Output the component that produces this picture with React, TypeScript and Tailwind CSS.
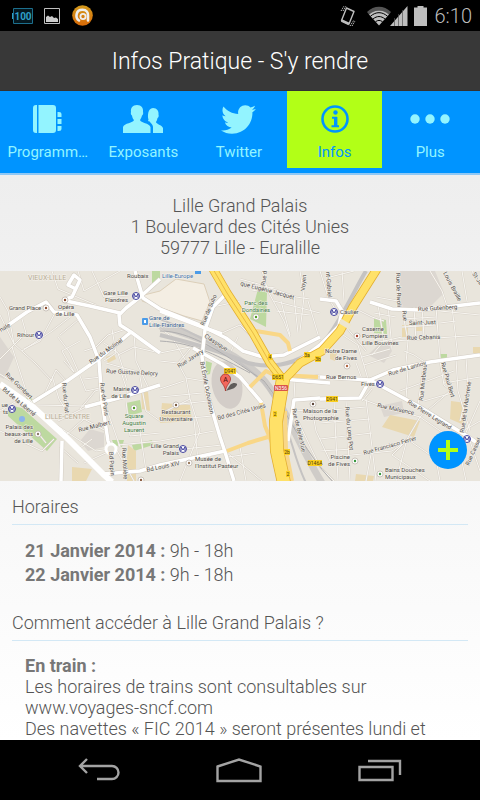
import { ReactNode } from 'react';
import { FaTwitter } from 'react-icons/fa';

type Label = { x: number; y: number; text: string; rotate?: number; anchor?: 'start' | 'middle' | 'end'; color?: string; size?: number };

const minorRoads = [
  'M14 73L8 40L0 26', 'M0 88L26 62L22 48', 'M0 44L14 73L35 92L52 110', 'M12 76L30 132', 'M24 78L40 70L56 40',
  'M22 80L52 60L70 46', 'M60 64L78 49', 'M0 103L14 112L32 131', 'M58 66L70 82L78 100', 'M64 90L74 101L62 80L80 70',
  'M44 124L56 99L66 110', 'M52 105L59 128L64 136', 'M64 112L66 136', 'M36 134L84 135', 'M80 138L95 120L102 118',
  'M84 108L102 106', 'M80 105L86 120L104 116', 'M84 80L96 76L108 64L126 58', 'M104 72L118 82L127 110', 'M112 58L116 82L104 90',
  'M106 92L156 106', 'M118 84L134 76L160 82', 'M134 62L136 90L148 116', 'M140 106L146 140L160 150', 'M120 98L130 128',
  'M126 130L130 165L160 162', 'M104 130L120 176', 'M58 150L90 134', 'M66 164L84 148L106 160', 'M56 154L96 180L110 178',
  'M76 180L92 168', 'M60 176L78 192', 'M84 192L110 180', 'M116 178L134 210', 'M118 174L160 170', 'M124 182L126 210',
  'M140 160L146 200', 'M0 160L42 180L54 168', 'M46 172L38 162', 'M0 140L20 128', 'M78 0L84 20L120 0', 'M52 0L58 18L96 34',
  'M92 0L104 26L130 24', 'M150 50L172 66L186 90', 'M160 82L190 76', 'M160 90L178 92L186 107L204 110', 'M178 92L190 78',
  'M160 118L184 110', 'M160 126L202 122', 'M186 107L190 128L166 140', 'M172 134L208 130', 'M160 150L212 145', 'M190 128L200 160L180 210',
  'M160 170L214 160', 'M184 178L222 174', 'M194 148L198 190', 'M222 178L250 200L262 210', 'M228 186L256 182', 'M240 176L246 210',
  'M213 36L240 30', 'M222 62L240 54L250 64', 'M238 66L230 82', 'M240 8L262 14L296 26L310 28', 'M262 0L268 20L284 50L290 66',
  'M252 20L275 16', 'M300 0L304 26L300 60', 'M274 30L320 42', 'M276 40L310 44', 'M281 30L290 64', 'M294 26L298 62', 'M308 30L320 70',
  'M320 0L328 26L342 50', 'M342 0L344 30', 'M330 6L354 0', 'M376 26L398 30L397 0', 'M378 34L384 70L372 84', 'M388 34L392 78',
  'M374 42L396 46', 'M402 38L408 70L406 92', 'M414 36L416 70', 'M422 36L424 66', 'M436 36L440 88', 'M452 36L458 86', 'M402 48L436 46',
  'M402 56L436 54', 'M394 70L480 64', 'M440 40L480 44', 'M440 52L456 50', 'M366 74L402 66', 'M346 56L366 80', 'M340 62L358 74L368 108',
  'M360 40L372 46L384 50', 'M362 86L390 78', 'M356 92L362 108', 'M364 94L396 84', 'M404 80L414 84L426 92', 'M424 92L418 134',
  'M408 98L406 128', 'M440 90L444 114L454 122', 'M456 88L458 120L470 160', 'M466 86L468 120L460 150', 'M400 120L454 100',
  'M450 120L420 146L406 170L392 184', 'M444 112L480 106', 'M424 130L452 122', 'M362 128L378 134L420 146', 'M366 128L372 176L376 210',
  'M372 118L362 130', 'M346 130L350 210', 'M334 130L338 210', 'M320 140L366 136', 'M320 152L370 148', 'M320 168L372 162',
  'M292 140L330 138', 'M294 128L295 108L320 104', 'M310 126L316 160L330 190', 'M298 150L320 196L334 210', 'M320 180L352 178',
  'M342 185L392 180L410 168', 'M372 178L366 210', 'M392 184L430 210', 'M410 170L436 188L440 210', 'M406 172L396 210', 'M420 146L452 168',
  'M438 174L480 150', 'M464 166L480 130', 'M458 172L466 210', 'M470 170L480 200', 'M430 0L442 20L448 38', 'M462 0L468 36', 'M472 0L480 14',
];

const mainRoads = [
  'M0 60L27 41L46 31L54 41L65 42L77 44L90 66L99 90L102 130L108 170L111 178', 'M66 30L90 35L120 42', 'M66 28L72 26L80 9L74 4L68 14L76 18',
  'M131 61L100 87L67 110L33 131', 'M160 8L140 26L126 37L119 44L120 54L131 61L146 72L160 82', 'M135 0L143 27L160 38L200 54L226 67L243 80L263 86L284 84L320 66',
  'M62 170L61 210', 'M85 136L126 125L160 114', 'M227 22L213 36L205 59L202 86L207 122L220 166L225 181L234 210',
  'M193 77L222 93L240 106L262 132', 'M160 40L205 57L222 63', 'M370 31L392 38L420 39L480 32', 'M370 109L393 99L430 91L480 84',
  'M320 106L370 109L383 116L420 136L467 165L480 174', 'M320 128L360 127L370 109', 'M296 92L320 74L339 55L342 40L336 30L320 28',
  'M288 170L294 129L320 127', 'M103 203L140 200L160 194L225 180', 'M282 108L330 112',
];

const streetNames: Label[] = [
  { x: 28, y: 9, text: 'VIEUX-LILLE', color: '#b5aa93', size: 7 },
  { x: 45, y: 148, text: 'LILLE-CENTRE', color: '#b5aa93', size: 7 },
  { x: 91, y: 93, text: 'Rue du Molinel', rotate: -35 },
  { x: 106, y: 102, text: 'Rue Gustave Delory', rotate: 3 },
  { x: 100, y: 112, text: 'Rue de Paris', rotate: 82 },
  { x: 5, y: 104, text: 'Rue Gombert', rotate: 44 },
  { x: 2, y: 119, text: 'Bd de la Liberté', rotate: 40 },
  { x: 62, y: 112, text: 'Rue du Plat', rotate: 84 },
  { x: 79, y: 161, text: 'Rue Malbert', rotate: -14 },
  { x: 109, y: 181, text: 'Bd Papin', rotate: 86 },
  { x: 122, y: 177, text: 'Rue Molière', rotate: 87 },
  { x: 147, y: 201, text: 'Bd Louis XIV', rotate: -12 },
  { x: 1, y: 61, text: 'nale', rotate: -30 },
  { x: 204, y: 55, text: 'Rue de Sulio', rotate: -67 },
  { x: 204, y: 66, text: 'Classique', rotate: 33 },
  { x: 179, y: 97, text: 'Rue Javary', rotate: -32 },
  { x: 200, y: 91, text: 'Bd Émile Dubuisson', rotate: 79 },
  { x: 218, y: 149, text: 'Bd des Cités Unies', rotate: -15 },
  { x: 240, y: 14, text: 'que Eugénie Jacquet', rotate: 15 },
  { x: 265, y: 15, text: 'Rue d', rotate: -82 },
  { x: 305, y: 20, text: 'Voyen', rotate: -86 },
  { x: 326, y: 1, text: 'nt-Gabriel', rotate: 86 },
  { x: 292, y: 138, text: 'Rue de Belle Vue', rotate: 77 },
  { x: 396, y: 2, text: 'Rue de Rivoli', rotate: 88 },
  { x: 443, y: 2, text: 'Louis Braille', rotate: 62 },
  { x: 472, y: 3, text: 'St-Jac', rotate: 55 },
  { x: 418, y: 40, text: 'Rue Gutenberg', rotate: -3 },
  { x: 409, y: 54, text: 'Saint-Just', rotate: -2 },
  { x: 402, y: 40, text: 'Rue', rotate: 82 },
  { x: 407, y: 69, text: 'Rue Cabanis', rotate: -2 },
  { x: 389, y: 105, text: 'Rue de Lannoy', rotate: -17 },
  { x: 326, y: 108, text: 'Rue Bernos' },
  { x: 423, y: 130, text: 'Rue Mirabeau', rotate: -84 },
  { x: 441, y: 92, text: 'Rue Paul Bert', rotate: 74 },
  { x: 377, y: 136, text: 'Rue Malsence', rotate: 12 },
  { x: 407, y: 132, text: 'Rue Pierre Legrand', rotate: 32 },
  { x: 345, y: 136, text: 'Rue du Long Pot', rotate: 84 },
  { x: 364, y: 184, text: 'Rue Francisco Ferrer', rotate: -16 },
  { x: 464, y: 162, text: 'Rue de la Marbrerie', rotate: -82 },
  { x: 469, y: 195, text: 'Rue Cassel', rotate: -66 },
];

const placeNames: Label[] = [
  { x: 127, y: 7, text: 'Roubaix' },
  { x: 128, y: 24, text: 'Gare Lille', anchor: 'end' },
  { x: 128, y: 31, text: 'Flandres', anchor: 'end' },
  { x: 9, y: 39, text: 'Grand Place' },
  { x: 66, y: 38, text: 'Opéra', anchor: 'middle' },
  { x: 65, y: 45, text: 'de Lille', anchor: 'middle' },
  { x: 17, y: 66, text: 'Rihour' },
  { x: 162, y: 7, text: 'Lille-Europe', color: '#4272ab' },
  { x: 149, y: 49, text: 'Gare de', color: '#35608e' },
  { x: 149, y: 56, text: 'Lille-Flandres', color: '#35608e' },
  { x: 130, y: 120, text: 'Mairie', anchor: 'end' },
  { x: 130, y: 127, text: 'de Lille', anchor: 'end' },
  { x: 134, y: 147, text: 'Square', anchor: 'middle', color: '#427c45' },
  { x: 134, y: 154, text: 'Augustin', anchor: 'middle', color: '#427c45' },
  { x: 134, y: 161, text: 'Laurent', anchor: 'middle', color: '#427c45' },
  { x: 8, y: 136, text: 'ue', anchor: 'end' },
  { x: 8, y: 143, text: 'ts', anchor: 'end' },
  { x: 33, y: 158, text: 'Palais des', anchor: 'end' },
  { x: 33, y: 165, text: 'beaux-arts', anchor: 'end' },
  { x: 33, y: 172, text: 'de Lille', anchor: 'end' },
  { x: 176, y: 143, text: 'Restaurant', anchor: 'middle' },
  { x: 176, y: 150, text: 'Universitaire', anchor: 'middle' },
  { x: 179, y: 177, text: 'Lille Grand', anchor: 'end' },
  { x: 179, y: 184, text: 'Palais', anchor: 'end' },
  { x: 195, y: 190, text: 'Musée de' },
  { x: 195, y: 197, text: "l'Institut Pasteur" },
  { x: 256, y: 34, text: 'Parc des', anchor: 'middle', color: '#427c45' },
  { x: 256, y: 41, text: 'Dondaines', anchor: 'middle', color: '#427c45' },
  { x: 340, y: 43, text: 'Caulier' },
  { x: 362, y: 60, text: 'Caserne' },
  { x: 362, y: 67, text: 'Pompiers' },
  { x: 362, y: 74, text: 'Lille Bouvines' },
  { x: 357, y: 82, text: 'Notre Dame', anchor: 'end' },
  { x: 357, y: 89, text: 'de Fives', anchor: 'end' },
  { x: 361, y: 115, text: 'Fives' },
  { x: 303, y: 142, text: 'Maison de la' },
  { x: 303, y: 149, text: 'Photographie' },
  { x: 350, y: 188, text: 'Piscine', anchor: 'end' },
  { x: 350, y: 195, text: 'de Fives', anchor: 'end' },
  { x: 385, y: 201, text: 'Bains Douches' },
  { x: 385, y: 208, text: 'Municipaux' },
];

const metros = [[39, 64], [136, 25], [135, 119], [12, 138], [183, 178], [334, 41], [380, 113], [467, 168]];
const pins = [[46, 37, '#8a4b30'], [65, 29, '#8a4b30'], [38, 163, '#8a7a66'], [134, 137, '#4d9a22'], [176, 134, '#7a5b40'], [189, 192, '#9a7b60'],
  [256, 46, '#4d9a22'], [357, 65, '#a33f2b'], [347, 95, '#b0643f'], [313, 133, '#5b4336'], [355, 190, '#35963c'], [380, 203, '#35963c'], [141, 209, '#8a5b40']] as const;

const signs = [
  { x: 224, y: 97, w: 12, text: 'D941' }, { x: 272, y: 103, w: 12, text: 'D651' }, { x: 326, y: 125, w: 12, text: 'D941' },
  { x: 308, y: 189, w: 14, text: 'D146A' }, { x: 304, y: 81, w: 6, text: '3a' }, { x: 315, y: 85, w: 6, text: '3b' },
  { x: 284, y: 178, w: 6, text: '2b' }, { x: 268, y: 83, w: 4, text: '4' }, { x: 273, y: 140, w: 4, text: '2' }, { x: 286, y: 200, w: 4, text: '2' },
];

function MapLabel({ x, y, text, rotate, anchor, color, size }: Label) {
  return (
    <text x={x} y={y} fontSize={size} textAnchor={anchor} fill={color ?? '#4f4b48'} transform={rotate ? `rotate(${rotate} ${x} ${y})` : undefined}>
      {text}
    </text>
  );
}

function LilleMap() {
  return (
    <svg viewBox="0 0 480 210" preserveAspectRatio="xMidYMid slice" className="block h-[210px] w-full bg-[#e9e5dc] font-normal" role="img" aria-label="Lille Grand Palais">
      {/* blocs, parcs et bâtiments */}
      <g fill="#dcd7d1">
        <path d="M0 66L14 86L4 108L0 106ZM90 158L104 162L104 176L88 180L80 170ZM400 0L435 0L444 22L428 38L400 36ZM378 74L388 70L392 80L384 92L368 84ZM380 135L402 130L404 142L384 146Z" />
        <ellipse cx="227" cy="114" rx="15" ry="24" transform="rotate(-12 227 114)" fill="#d3cdc8" />
      </g>
      <g fill="#bdd9a0">
        <path d="M8 134L22 137L57 168L47 180L8 145ZM126 132L140 129L142 141L129 145ZM112 169L124 169L122 176L114 174ZM132 174L152 169L153 174L134 180ZM258 18L267 21L266 56L250 48ZM206 90L212 92L210 103L206 104ZM374 47L386 49L387 63L374 62ZM439 83L447 83L447 89L439 89ZM24 129L30 125L33 130L27 135ZM152 0L160 0L160 9L152 17Z" />
      </g>
      <g fill="#e9d8b0">
        <path d="M106 86L114 83L116 88L108 92ZM141 120L148 121L150 140L142 138ZM128 174L136 180L136 210L125 210ZM72 196L92 198L86 210L72 210ZM162 132L190 134L192 150L160 152ZM390 144L420 150L414 166L382 156ZM451 130L466 132L464 154L450 148ZM402 54L408 54L408 66L402 66ZM416 52L422 52L422 60L416 60ZM473 76L480 76L480 84L473 82ZM330 80L337 82L335 90L330 88ZM356 203L374 205L373 210L355 210Z" />
      </g>
      <path d="M160 20L176 8L204 13L210 31L202 50L184 45L142 30L144 24Z" fill="#f4eee3" stroke="#dccfb9" />
      <circle cx="22" cy="148" r="3" fill="#8bb4ec" />

      <g fill="none" strokeLinejoin="round">
        <g stroke="#d9d3ca" strokeWidth="2">{minorRoads.map(d => <path key={d} d={d} />)}</g>
        <g stroke="#f8f6f1" strokeWidth="1">{minorRoads.map(d => <path key={d} d={d} />)}</g>

        {/* voies ferrées */}
        <g stroke="#c5c3c2">
          <path d="M160 55C200 66 236 82 260 105C284 130 296 170 322 212" strokeWidth="7" opacity=".75" />
          <path d="M160 64C200 74 225 82 248 92C280 100 310 88 328 66C346 40 356 16 366 0" strokeWidth="4" />
          <path d="M160 48C200 64 236 86 262 110C290 145 290 180 306 212" strokeWidth="2" />
          <path d="M160 60C190 60 220 80 264 110C288 140 300 176 334 212M160 70C196 72 220 86 250 102" strokeWidth="1" stroke="#aeadae" />
        </g>

        <g stroke="#d3cdc4" strokeWidth="4.5">{mainRoads.map(d => <path key={d} d={d} />)}</g>
        <g stroke="#fff" strokeWidth="3.5">{mainRoads.map(d => <path key={d} d={d} />)}</g>
        <path d="M0 113L33 136L66 166L103 203L112 211" stroke="#fff" strokeWidth="6" />
        <circle cx="111" cy="178" r="5" stroke="#fff" strokeWidth="3" fill="#e9e5dc" />

        {/* bretelles */}
        <g stroke="#f9d787" strokeWidth="4">
          <path d="M227 180L248 172L268 166M261 132L265 155L272 172L280 210M256 60L280 64L288 72L290 80M250 116L266 100L280 107M280 104L318 106M285 140L286 180L292 210" />
        </g>
        <g stroke="#e3ae2f">
          <path d="M213 -2L227 22L253 62L270 92L284 110" strokeWidth="9" />
          <path d="M283 108L276 150L277 180L284 212" strokeWidth="14" />
          <path d="M283 110L300 92L322 80L340 60L353 36L377 -2" strokeWidth="9" />
        </g>
        <g stroke="#ffe168">
          <path d="M213 -2L227 22L253 62L270 92L284 110" strokeWidth="7.5" />
          <path d="M283 108L276 150L277 180L284 212" strokeWidth="12.5" />
          <path d="M283 110L300 92L322 80L340 60L353 36L377 -2" strokeWidth="7.5" />
        </g>
        <path d="M213 -2L227 22L253 62L270 92L284 110" stroke="#e9b944" strokeWidth="1" />
        <path d="M340 50L350 56" stroke="#ece5d0" strokeWidth="5" />
      </g>

      <g fontFamily="Roboto, sans-serif" fontSize="6" stroke="#f5f2ec" strokeWidth="1" paintOrder="stroke">
        {streetNames.map(l => <MapLabel key={l.text + l.x} {...l} />)}
        {placeNames.map(l => <MapLabel key={l.text + l.x} {...l} />)}
      </g>

      {metros.map(([x, y]) => (
        <g key={x} fill="none" stroke="#41419c">
          <circle cx={x} cy={y} r="3.5" fill="#fff" />
          <path d={`M${x - 2} ${y + 2}V${y - 2}L${x} ${y + 1}L${x + 2} ${y - 2}V${y + 2}`} />
        </g>
      ))}
      <rect x="142" y="47" width="6" height="7" rx="1" fill="#4b9be8" />
      <rect x="144" y="49" width="2" height="3" fill="#fff" />
      <path d="M195 0H201V3H195Z" fill="#4b9be8" />
      {pins.map(([x, y, color]) => (
        <g key={x}>
          <circle cx={x} cy={y} r="3" fill="#fff" stroke="#b9b0a6" strokeWidth=".7" />
          <circle cx={x} cy={y} r="1.2" fill={color} />
        </g>
      ))}

      <g fontFamily="Roboto, sans-serif" fontSize="5" textAnchor="middle">
        {signs.map(s => (
          <g key={s.x}>
            <rect x={s.x} y={s.y} width={s.w} height="6" fill="#fbcf20" />
            <text x={s.x + s.w / 2} y={s.y + 5} fill="#4b3b10">{s.text}</text>
          </g>
        ))}
        <rect x="274" y="114" width="14" height="6" rx="1" fill="#d9534a" />
        <text x="281" y="119" fill="#fff">N356</text>
      </g>

      {/* marqueur A */}
      <path d="M226 120L230 114C233 111 238 112 237 114C235 118 231 118 226 120Z" fill="#000" opacity=".55" />
      <path d="M225.500 120C225 114 220.500 112 220.500 108A5 5 0 0 1 230.500 108C230.500 112 226 114 225.500 120Z" fill="#f2675c" stroke="#a6322b" strokeWidth=".8" />
      <text x="225.500" y="111" fontFamily="Roboto, sans-serif" fontSize="7" textAnchor="middle" fill="#4a0f0b">A</text>
    </svg>
  );
}

function StatusBar() {
  return (
    <header className="flex h-[31px] shrink-0 items-center justify-between bg-black pr-2 pl-3 text-[#bebebe]">
      <div className="flex items-center">
        <svg width="22" height="18" viewBox="0 0 22 18">
          <path d="M1.500 1.500H20.500V16.500H1.500Z" fill="#04171f" stroke="#1c6f8d" />
          <path d="M0 6H1V12H0Z" fill="#2f9fc8" />
          <text x="11" y="13" fontFamily="Roboto, sans-serif" fontSize="10" fontWeight="700" textAnchor="middle" fill="#2f9fc8">100</text>
        </svg>
        <svg className="ml-[10px]" width="16" height="16" viewBox="0 0 16 16">
          <path d="M.5.5H15.500V15.500H.5Z" fill="none" stroke="currentColor" />
          <path d="M2 14V9L4 7.500L6 9L8 8L10 10L12 9.500L14 11V14Z" fill="#ccc" />
        </svg>
        <svg className="ml-3" width="21" height="21" viewBox="0 0 21 21">
          <defs>
            <linearGradient id="avast" x1="0" y1="0" x2="0" y2="1">
              <stop offset="0" stopColor="#d29a1c" />
              <stop offset="1" stopColor="#d96a08" />
            </linearGradient>
          </defs>
          <circle cx="10.500" cy="10.500" r="10.300" fill="url(#avast)" />
          <path d="M7 15.500C3 13 3.500 4.800 10.500 4.800C14.500 4.800 16.200 7.500 16 10.500V15.500" fill="none" stroke="#eee" strokeWidth="2.600" strokeLinecap="round" />
          <circle cx="11" cy="11.500" r="2.600" fill="none" stroke="#eee" strokeWidth="1.800" />
        </svg>
      </div>
      <div className="flex items-center">
        <svg width="18" height="22" viewBox="0 0 18 22" fill="none" stroke="currentColor">
          <path d="M7.500 3L15 6.500L10 19L2.500 15.500Z" strokeWidth="1.400" strokeLinejoin="round" />
          <path d="M2.500 15.500L10 19" strokeWidth="2.500" />
          <path d="M4 6L7 1M2 6L5 1M11 21L15 15M13 21L16 16" strokeWidth="1" strokeDasharray="1.500 1" />
        </svg>
        <svg className="ml-[10px]" width="24" height="20" viewBox="0 0 24 20">
          <path d="M0 6C7-1 17-1 24 6L22 8.500C16 3 8 3 2 8.500Z" fill="#555" />
          <path d="M2 8.500C8 3 16 3 22 8.500L12 19.500Z" fill="currentColor" />
          <path d="M3.500 10.200C9 5.500 15 5.500 20.500 10.200M6 13C10 9.700 14 9.700 18 13M8.500 15.700C11 14 13 14 15.500 15.700" fill="none" stroke="#000" strokeWidth="1" />
        </svg>
        <svg className="-ml-px" width="18" height="20" viewBox="0 0 18 20">
          <path d="M17.500 0V20H0Z" fill="currentColor" />
          <path d="M4.500 12V20M8.500 8V20M12.500 4V20" stroke="#555" strokeWidth=".7" />
        </svg>
        <svg className="ml-[6px]" width="13" height="20" viewBox="0 0 13 20">
          <path d="M0 1.500H3.500V0H9.500V1.500H13V20H0Z" fill="currentColor" />
        </svg>
        <time className="ml-2 text-[20px] leading-6 font-light">6:10</time>
      </div>
    </header>
  );
}

function Tab({ label, active, children }: { label: string; active?: boolean; children: ReactNode }) {
  return (
    <a
      href="#"
      aria-current={active ? 'page' : undefined}
      className={`flex h-[77px] flex-col items-center pt-[13px] ${active ? 'bg-[#b2ff17] text-[#0094ff]' : 'text-[#93f4ff]'}`}
    >
      <span className="flex h-[30px] items-center">{children}</span>
      <span className="mt-2 text-[15px] leading-5">{label}</span>
    </a>
  );
}

function Section({ title, children }: { title: string; children: ReactNode }) {
  return (
    <section className="mb-6">
      <h2 className="border-b border-[#d3e8f5] pb-[5px] leading-6">{title}</h2>
      <div className="px-[13px] pt-[14px]">{children}</div>
    </section>
  );
}

export default function App() {
  return (
    <div className="flex h-screen flex-col overflow-hidden bg-black font-['Roboto',sans-serif]">
      <StatusBar />

      <h1 className="h-[60px] shrink-0 border-b border-[#333] bg-[#383838] text-center text-[23px] leading-[62px] font-light text-white">
        Infos Pratique - S'y rendre
      </h1>

      <nav className="grid h-[84px] shrink-0 grid-cols-5 border-b-2 border-[#8fc8f5] bg-[#0094ff] pr-0.5">
        <Tab label="Programm…">
          <svg width="29" height="28" viewBox="0 0 29 28" fill="currentColor">
            <path d="M3 0H4V28H3Q0 28 0 25V3Q0 0 3 0ZM5.500 0H20Q23 0 23 3V25Q23 28 20 28H5.500ZM24.500 7H26Q28.500 7 28.500 9V12H24.500ZM24.500 14H28.500V19H24.500ZM24.500 21H28.500V24Q28.500 26 26 26H24.500Z" />
          </svg>
        </Tab>
        <Tab label="Exposants">
          <svg width="40" height="28" viewBox="0 0 40 28" fill="currentColor">
            <path d="M14 0C18.500 0 20.500 3 20 7C20.500 8 20 10 19 10.500C18.500 13 17.500 14 17 15C17.500 18 26.500 18 27.500 22V28H0V22C1 18 10.500 18 11 15C10 14 9.300 13 9 10.500C8 10 7.500 8 8 7C7.500 3 9.500 0 14 0Z" />
            <path d="M30 3C34 3 36 6 35.500 9.500C36 11 35.500 12.500 34.500 13C34.200 15 33.500 16 33 17C33 19 39 20 40 23V28H30V22C30 19 26.500 17.500 27 16.500C25.500 16.500 24.500 16 25.500 14.500C24.500 12 24.500 3 30 3Z" />
          </svg>
        </Tab>
        <Tab label="Twitter">
          <FaTwitter size={35} />
        </Tab>
        <Tab label="Infos" active>
          <svg width="28" height="28" viewBox="0 0 28 28" fill="none" stroke="currentColor">
            <circle cx="14" cy="14" r="12.500" strokeWidth="2.600" />
            <circle cx="14.500" cy="7.500" r="2.200" fill="currentColor" stroke="none" />
            <path d="M11 12.800H15V21M10.500 21.200H18" strokeWidth="2" />
            <path d="M14.700 12V21.500" strokeWidth="3.400" />
          </svg>
        </Tab>
        <Tab label="Plus">
          <svg width="40" height="10" viewBox="0 0 40 10" fill="currentColor">
            <circle cx="5" cy="5" r="4.700" />
            <circle cx="20" cy="5" r="4.700" />
            <circle cx="35" cy="5" r="4.700" />
          </svg>
        </Tab>
      </nav>

      <main className="min-h-0 flex-1 overflow-hidden bg-linear-to-b from-[#eeeeee] to-white text-[18px] font-light text-[#555]">
        <address className="pt-5 pb-[13px] text-center leading-[21px] not-italic">
          Lille Grand Palais
          <br />
          1 Boulevard des Cités Unies
          <br />
          59777 Lille - Euralille
        </address>

        <div className="relative">
          <LilleMap />
          <button type="button" aria-label="Agrandir la carte" className="absolute right-[13px] bottom-3 flex size-[38px] items-center justify-center rounded-full bg-[#0094ff]">
            <svg width="20" height="20" viewBox="0 0 20 20" stroke="#b2ff17" strokeWidth="4">
              <path d="M10 0V20M0 10H20" />
            </svg>
          </button>
        </div>

        <div className="px-3 pt-[14px]">
          <Section title="Horaires">
            <p className="leading-6"><b className="font-bold text-[#777]">21 Janvier 2014 :</b> 9h - 18h</p>
            <p className="leading-6"><b className="font-bold text-[#777]">22 Janvier 2014 :</b> 9h - 18h</p>
          </Section>
          <Section title="Comment accéder à Lille Grand Palais ?">
            <p className="leading-[21px]">
              <b className="font-bold text-[#777]">En train :</b>
              <br />
              Les horaires de trains sont consultables sur <a href="#">www.voyages-sncf.com</a>
              <br />
              Des navettes « FIC 2014 » seront présentes lundi et
            </p>
          </Section>
        </div>
      </main>

      <footer className="flex h-[60px] shrink-0 items-center justify-around bg-black px-[30px] text-[#a3a3a3]">
        <button type="button" aria-label="Retour">
          <svg width="42" height="24" viewBox="0 0 42 24" fill="none" stroke="currentColor" strokeWidth="2.400">
            <path d="M9 1L2 8L9 15M2 8H34A6.500 6.500 0 0 1 34 21H19" />
          </svg>
        </button>
        <button type="button" aria-label="Accueil">
          <svg width="46" height="26" viewBox="0 0 46 26" fill="none" stroke="currentColor" strokeWidth="2.400">
            <path d="M1.500 9.500L23 2.500L44.500 9.500V24H1.500Z" />
          </svg>
        </button>
        <button type="button" aria-label="Applications récentes">
          <svg width="44" height="24" viewBox="0 0 44 24" fill="none" stroke="currentColor" strokeWidth="2.400">
            <path d="M1.500 9H34.500V22H1.500ZM10 3H42V17" />
          </svg>
        </button>
      </footer>
    </div>
  );
}
